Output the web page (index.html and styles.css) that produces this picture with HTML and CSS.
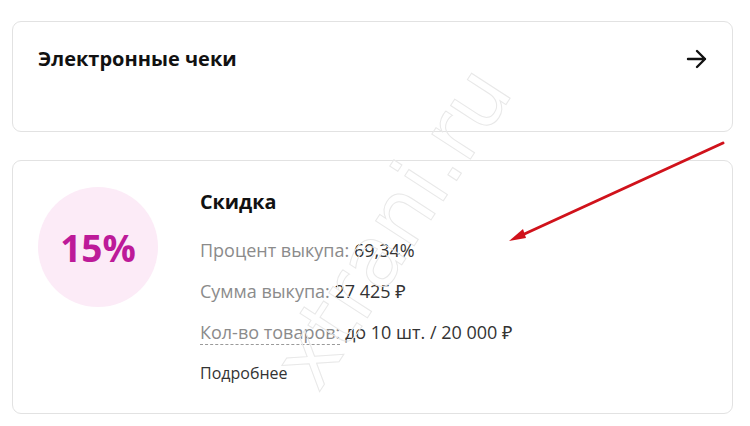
FILE: index.html
```html
<!doctype html>
<html lang="ru">
<head>
    <meta charset="UTF-8">
    <title>Скидка покупателя</title>
    <link rel="stylesheet" href="styles.css">
</head>
<body>
<div class="page">
    <div class="card receipts">
        <span class="receipts-title">Электронные чеки</span>
        <svg class="go" width="22" height="20" viewBox="0 0 22 20">
            <path d="M2 10h17M11 2l8 8-8 8" fill="none" stroke="#111" stroke-width="2.4" stroke-linecap="round" stroke-linejoin="round"/>
        </svg>
    </div>

    <div class="card discount">
        <div class="badge">15%</div>
        <div class="info">
            <div class="info-title">Скидка</div>
            <div class="row"><span class="label">Процент выкупа:</span> 69,34%</div>
            <div class="row"><span class="label">Сумма выкупа:</span> 27 425 ₽</div>
            <div class="row"><span class="label dashed">Кол-во товаров:</span> до 10 шт. / 20 000 ₽</div>
            <div class="more">Подробнее</div>
        </div>
    </div>

    <!-- водяной знак и стрелка поверх карточек -->
    <div class="mark">xtrani.ru</div>
    <svg class="pointer" width="750" height="426" viewBox="0 0 750 426">
        <line x1="723" y1="143" x2="520" y2="236" stroke="#d0121b" stroke-width="3" stroke-linecap="round"/>
        <path d="M509 241l14-12 3 9z" fill="#d0121b"/>
    </svg>
</div>
</body>
</html>
```

FILE: styles.css
```css
body{
    margin: 0;
    background: #fff;
    font-family: "Open Sans", "Noto Sans", sans-serif;
    color: #222;
}
.page{
    position: relative;
    width: 750px;
    height: 426px;
    padding: 21px 17px 0 12px;
    box-sizing: border-box;
    overflow: hidden;
}
.card{
    border: 1px solid #e2e2e2;
    border-radius: 9px;
    box-sizing: border-box;
}
.receipts{
    height: 111px;
    display: flex;
    align-items: flex-start;
    justify-content: space-between;
    padding: 23px 24px 0 25px;
}
.receipts-title{
    font-size: 20px;
    font-weight: 700;
    line-height: 28px;
    color: #111;
}
.go{
    margin-top: 4px;
}
.discount{
    margin-top: 28px;
    height: 254px;
    display: flex;
    padding: 26px 0 0 25px;
}
.badge{
    width: 120px;
    height: 120px;
    border-radius: 50%;
    background: #fcebf7;
    color: #bd1a99;
    font-size: 37px;
    font-weight: 700;
    display: flex;
    align-items: center;
    justify-content: center;
    flex-shrink: 0;
}
.info{
    margin-left: 42px;
    display: flex;
    flex-direction: column;
}
.info-title{
    font-size: 19.8px;
    font-weight: 700;
    line-height: 30px;
    color: #111;
    margin-bottom: 21px;
}
.row{
    font-size: 18px;
    line-height: 24px;
    color: #333;
    margin-bottom: 17px;
}
.label{
    color: #8b8b8b;
}
.dashed{
    border-bottom: 1px dashed #9a9a9a;
}
.more{
    font-size: 16px;
    line-height: 24px;
    color: #333;
}
.mark{
    position: absolute;
    left: 212px;
    top: 178px;
    font-size: 84px;
    font-family: "DejaVu Sans", sans-serif;
    color: transparent;
    -webkit-text-stroke: 1px #e8e8e8;
    transform: rotate(-57deg);
    transform-origin: center;
    pointer-events: none;
}
.pointer{
    position: absolute;
    left: 0;
    top: 0;
}
```
